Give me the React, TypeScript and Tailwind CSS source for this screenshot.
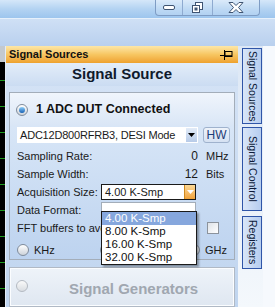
import React from 'react';

const Radio = ({ checked, disabled }: { checked?: boolean; disabled?: boolean }) => (
  <span
    className={`inline-flex h-[12px] w-[12px] shrink-0 items-center justify-center rounded-full border ${
      disabled ? 'border-[#b4bac2] bg-gradient-to-b from-[#fafafa] to-[#d9dde2]' : 'border-[#7f8b9b] bg-gradient-to-b from-[#ffffff] to-[#cdd3da]'
    }`}
  >
    {checked && <span className="h-[6px] w-[6px] rounded-full bg-gradient-to-b from-[#8fd0fa] to-[#0f5fb3]" />}
  </span>
);

const ChartStrip = () => (
  <svg width="5" height="261" className="block">
    <rect x="0" y="0" width="5" height="16" fill="#c3c9d0" />
    <rect x="0" y="16" width="5" height="245" fill="#000" />
    {[80, 106, 132, 158, 184, 210, 236, 262, 288].map((y) => (
      <line key={y} x1="0" x2="5" y1={y - 46 + 0.5} y2={y - 46 + 0.5} stroke="#1f9a1f" />
    ))}
  </svg>
);

const PinIcon = () => (
  <svg width="13" height="11" viewBox="0 0 13 11" className="block">
    <line x1="0" y1="6.5" x2="4" y2="6.5" stroke="#000" />
    <line x1="4.5" y1="1" x2="4.5" y2="11" stroke="#000" />
    <rect x="5" y="2.5" width="7" height="5" fill="none" stroke="#000" />
    <line x1="5" y1="7" x2="12" y2="7" stroke="#000" strokeWidth="1.5" />
  </svg>
);

const Arrow = ({ color }: { color: string }) => (
  <svg width="7" height="4" viewBox="0 0 7 4">
    <path d="M0 0 H7 L3.5 4 Z" fill={color} />
  </svg>
);

const VTab = ({ label, h }: { label: string; h: string }) => (
  <div
    className={`${h} flex w-[20px] items-center justify-center border border-[#2f55a8] bg-gradient-to-r from-[#d9e6f8] to-[#b6cdef] text-[10.5px] text-[#0c1a38] [writing-mode:vertical-rl]`}
  >
    {label}
  </div>
);

export default function App() {
  return (
    <div className="relative h-[307px] w-[275px] overflow-hidden bg-white font-['Liberation_Sans',Arial,sans-serif] text-[11px] text-[#1a1a1a]">
      {/* title bar */}
      <div className="flex h-[18px] justify-end bg-gradient-to-b from-[#d5e7f9] via-[#b3d3f2] to-[#9dc5ee] pr-[15px]">
        <div className="flex h-[16px] rounded-b-[4px] border-x border-b border-[#7e9cc4] bg-white/15">
          <div className="flex w-[26px] items-center justify-center">
            <div className="h-[5px] w-[12px] rounded-[2px] border border-[#3f5472] bg-white" />
          </div>
          <div className="flex w-[30px] items-center justify-center border-l border-[#8eaad0]">
            <svg width="11" height="11" viewBox="0 0 11 11">
              <rect x="3.5" y="0.5" width="7" height="7" fill="#fff" stroke="#3f5472" />
              <rect x="0.5" y="3.5" width="7" height="7" fill="#fff" stroke="#3f5472" />
              <rect x="2.5" y="5.5" width="3" height="3" fill="#3f5472" />
            </svg>
          </div>
          <div className="flex w-[47px] items-center justify-center border-l border-[#8eaad0]">
            <svg width="16" height="11" viewBox="0 0 16 11">
              <path
                d="M1 0.5 H5 L8 3.5 L11 0.5 H15 L10.5 5.5 L15 10.5 H11 L8 7.5 L5 10.5 H1 L5.5 5.5 Z"
                fill="#fff"
                stroke="#3f5472"
                strokeLinejoin="round"
              />
            </svg>
          </div>
        </div>
      </div>
      <div className="h-[1px] bg-[#e6f0fb]" />
      <div className="h-[27px] bg-gradient-to-b from-[#cfe0f5] to-[#b9d0ee]" />

      {/* main row */}
      <div className="flex h-[261px]">
        <ChartStrip />
        <div className="w-[1px] bg-[#e4ecf6]" />

        {/* panel */}
        <div className="flex w-[232px] flex-col bg-gradient-to-b from-[#d6e4f6] to-[#c0d5ef]">
          <div className="flex h-[21px] items-center justify-between bg-gradient-to-b from-[#fde7a6] via-[#f7c661] to-[#eea12c] pl-[3px] pr-[5px]">
            <span className="text-[11px] font-bold text-[#111]">Signal Sources</span>
            <PinIcon />
          </div>
          <div className="flex h-[30px] items-center justify-center bg-gradient-to-b from-[#e3edf9] to-[#cbdcf2] text-[15px] font-bold text-[#0f1a2c]">
            Signal Source
          </div>

          <div className="flex flex-col gap-[7px] px-[3px] pt-[6px]">
            {/* group box */}
            <div className="flex h-[168px] flex-col border border-[#a3adb9] shadow-[inset_0_0_0_1px_#f4f8fd]">
              <div className="flex h-[34px] items-center gap-[8px] bg-gradient-to-b from-[#f0f5fc] to-[#d9e6f6] pl-[6px]">
                <Radio checked />
                <span className="text-[12.5px] font-bold text-[#111]">1 ADC DUT Connected</span>
              </div>
              <div className="flex flex-1 flex-col bg-gradient-to-b from-[#d8e6f7] to-[#bdd3ef] pl-[7px] pr-[3px]">
                <div className="mt-[1px] flex h-[16px] items-center">
                  <div className="flex h-[16px] w-[181px] items-center justify-between bg-white pl-[3px] pr-[1px]">
                    <span className="tracking-[-0.2px]">ADC12D800RFRB3, DESI Mode</span>
                    <span className="flex h-[14px] w-[11px] items-center justify-center bg-gradient-to-b from-[#e3ecf8] to-[#b7cbe8]">
                      <Arrow color="#000" />
                    </span>
                  </div>
                  <div className="ml-[5px] flex h-[16px] w-[27px] items-center justify-center rounded-[3px] border border-[#9fb2cd] bg-gradient-to-b from-[#eef3fa] to-[#d5e1f2] text-[12px] text-[#1d3d78]">
                    HW
                  </div>
                </div>

                <div className="mt-[4px] flex h-[18px] items-center">
                  <span className="flex-1">Sampling Rate:</span>
                  <span className="mr-[8px] text-[12px]">0</span>
                  <span className="w-[25px]">MHz</span>
                </div>
                <div className="flex h-[18px] items-center">
                  <span className="flex-1">Sample Width:</span>
                  <span className="mr-[8px] text-[12px]">12</span>
                  <span className="w-[25px]">Bits</span>
                </div>
                <div className="flex h-[18px] items-center">
                  <span className="w-[84px]">Acquisition Size:</span>
                  <div className="flex h-[16px] w-[95px] items-center justify-between border border-[#1a1a1a] bg-white pl-[3px]">
                    <span>4.00 K-Smp</span>
                    <span className="flex h-[14px] w-[11px] items-center justify-center border-l border-[#d08a1e] bg-gradient-to-b from-[#fcd995] to-[#f1a339]">
                      <Arrow color="#fff" />
                    </span>
                  </div>
                </div>
                <div className="flex h-[18px] items-center">
                  <span className="w-[84px]">Data Format:</span>
                  <div className="h-[16px] w-[95px] border border-[#a3adb9] bg-white" />
                </div>
                <div className="flex h-[18px] items-center">
                  <span className="w-[84px] overflow-hidden whitespace-nowrap">FFT buffers to average:</span>
                  <div className="h-[16px] w-[95px] bg-white" />
                  <span className="ml-[11px] h-[12px] w-[12px] border border-[#8c939c] bg-gradient-to-br from-[#dfe3e8] to-[#ffffff]" />
                </div>
                <div className="mt-[4px] flex h-[18px] items-center">
                  <Radio />
                  <span className="ml-[5px] w-[66px]">KHz</span>
                  <Radio />
                  <span className="ml-[5px] w-[71px]" />
                  <Radio />
                  <span className="ml-[5px]">GHz</span>
                </div>
              </div>
            </div>

            {/* Signal Generators */}
            <div className="flex h-[40px] items-start border border-[#b0b9c5] bg-gradient-to-b from-[#eef3f9] to-[#dfe7f1] pl-[6px] pt-[12px] shadow-[inset_0_0_0_1px_#fbfdff]">
              <Radio disabled />
              <span className="ml-[41px] -mt-[2px] text-[15px] font-bold text-[#a0a7b0]">Signal Generators</span>
            </div>
          </div>
        </div>

        {/* right tab strip */}
        <div className="flex w-[25px] flex-col bg-gradient-to-b from-[#dce7f5] to-[#f4f8fc] pl-[4px] pt-[2px]">
          <VTab label="Signal Sources" h="h-[76px]" />
          <div className="h-[3px]" />
          <VTab label="Signal Control" h="h-[84px]" />
          <div className="h-[5px]" />
          <VTab label="Registers" h="h-[53px]" />
        </div>
        <div className="flex-1 bg-[#f6f9fd]" />
      </div>

      {/* open dropdown list */}
      <div className="absolute left-[101px] top-[211px] w-[96px] border border-[#1a1a1a] bg-white shadow-[2px_2px_2px_rgba(0,0,0,0.35)]">
        {['4.00 K-Smp', '8.00 K-Smp', '16.00 K-Smp', '32.00 K-Smp'].map((s, i) => (
          <div
            key={s}
            className={`flex h-[13px] items-center pl-[3px] text-[11.5px] leading-[13px] ${i === 0 ? 'bg-[#86a7dd] text-white' : 'text-[#111]'}`}
          >
            {s}
          </div>
        ))}
      </div>
    </div>
  );
}
